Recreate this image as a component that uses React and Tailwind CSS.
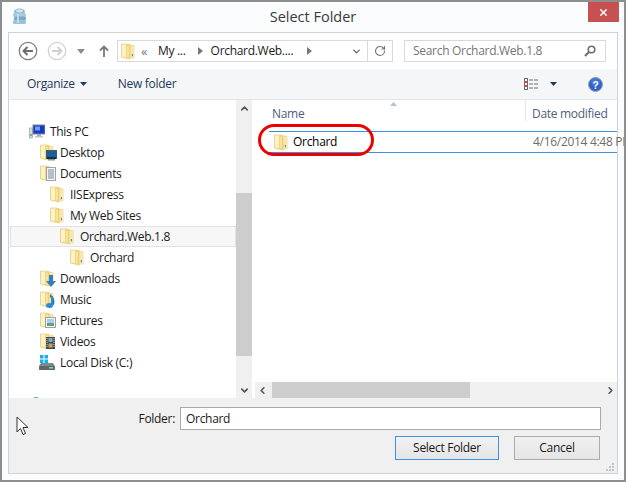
import { ChevronUp, ChevronDown, ChevronLeft, ChevronRight, X, RotateCw } from "lucide-react";

// Carpeta amarilla estilo Windows 8, con un pequeño detalle azul abajo
function Folder({ className = "" }) {
  return (
    <svg width="14" height="17" viewBox="0 0 14 17" className={"shrink-0 block " + className}>
      <path d="M0.5 1 H7 L8 2.5 H13 V15 H4 L0.5 14 Z" fill="#f3dd92" stroke="#d9c27a" strokeWidth="0.6" />
      <path d="M1 1.5 H6 V14.5 L1 13.5 Z" fill="#fcf3c4" />
      <path d="M5 2 L9.5 0.8 V16.5 L5 15.2 Z" fill="#efcf72" />
      <path d="M5.6 3 L8 2.4 V14.8 L5.6 14.2 Z" fill="#f8e39a" />
      <path d="M9.5 2.5 H13 V15 H9.5 Z" fill="#f6e7ae" />
      <path d="M10.8 11 h1.2 v2.3 h-1.2 Z" fill="#4f94cc" />
    </svg>
  );
}

function Badge({ kind }) {
  if (kind === "desktop") {
    return (
      <svg width="11" height="11" viewBox="0 0 11 11" className="absolute left-[6px] top-[6px]">
        <rect x="0" y="0.5" width="11" height="8" fill="#1d5f98" stroke="#4a5a68" />
        <rect x="1" y="7" width="9" height="2" fill="#16324b" />
        <rect x="2" y="9" width="7" height="1.5" fill="#8a949c" />
      </svg>
    );
  }
  if (kind === "docs") {
    return (
      <svg width="10" height="14" viewBox="0 0 10 14" className="absolute left-[6px] top-[2px]">
        <rect x="0.5" y="0.5" width="9" height="13" fill="#f4f6f8" stroke="#9aa3ab" />
        <path d="M2 3h6M2 5h6M2 7h6M2 9h6M2 11h6" stroke="#7d8a96" />
      </svg>
    );
  }
  if (kind === "down") {
    return (
      <svg width="10" height="12" viewBox="0 0 10 12" className="absolute left-[6px] top-[5px]">
        <path d="M3 0h4v6h3l-5 6-5-6h3z" fill="#2f7fc4" />
      </svg>
    );
  }
  if (kind === "music") {
    return (
      <svg width="9" height="14" viewBox="0 0 9 14" className="absolute left-[6px] top-[3px]">
        <path d="M4 0 C8 3 9 6 8 11 L6 10 L6 5 L4 3 Z" fill="#1d6fb8" />
        <ellipse cx="3.5" cy="11.5" rx="3.5" ry="2.5" fill="#2f88d0" />
        <rect x="5" y="2" width="2" height="9" fill="#2f88d0" />
      </svg>
    );
  }
  if (kind === "pics") {
    return (
      <svg width="11" height="11" viewBox="0 0 11 11" className="absolute left-[5px] top-[5px]">
        <rect x="0.5" y="0.5" width="10" height="10" fill="#f2f4f5" stroke="#9ba3a8" />
        <rect x="2" y="2" width="7" height="4" fill="#a8d0e6" />
        <rect x="2" y="6" width="7" height="3" fill="#6f9a88" />
      </svg>
    );
  }
  if (kind === "video") {
    return (
      <svg width="9" height="12" viewBox="0 0 9 12" className="absolute left-[6px] top-[4px]">
        <rect width="9" height="12" fill="#3f4a52" />
        <rect x="2.5" y="1" width="4" height="4" fill="#7fa7c4" />
        <rect x="2.5" y="6.5" width="4" height="4" fill="#c5a45a" />
        <path d="M1 1v10M8 1v10" stroke="#d8dde0" strokeDasharray="1 1" />
      </svg>
    );
  }
  return null;
}

function TreeIcon({ kind }) {
  if (kind === "pc") {
    return (
      <svg width="16" height="16" viewBox="0 0 16 16" className="shrink-0">
        <rect x="0.5" y="4" width="3" height="10" fill="#d6dbd8" stroke="#8f9a95" strokeWidth="0.6" />
        <rect x="1" y="10" width="2" height="2" fill="#58c05a" />
        <rect x="4" y="1" width="12" height="9" fill="#1738c8" stroke="#7e8a99" />
        <rect x="6" y="2.5" width="5" height="4" fill="#6fa0ee" />
        <rect x="8" y="10" width="4" height="2" fill="#a5adb5" />
        <rect x="6" y="12" width="8" height="1.5" fill="#c0c6cc" />
      </svg>
    );
  }
  if (kind === "disk") {
    return (
      <svg width="16" height="17" viewBox="0 0 16 17" className="shrink-0">
        <path d="M1 1h3.5v3.5H1zM5.5 1H9v3.5H5.5zM1 5.5h3.5V9H1zM5.5 5.5H9V9H5.5z" fill="#12b2ee" />
        <path d="M2 9 H14 L16 12 V16 H0 V12 Z" fill="#7d8a8c" />
        <rect x="0.5" y="12" width="15" height="4" fill="#5b6769" />
        <rect x="10" y="13" width="4" height="1.5" fill="#7fdc7a" />
      </svg>
    );
  }
  return (
    <span className="relative block w-[16px] h-[17px] shrink-0">
      <Folder />
      <Badge kind={kind} />
    </span>
  );
}

const treeRows = [
  { label: "This PC", icon: "pc", indent: "pl-[20px]", gap: "gap-[5px]" },
  { label: "Desktop", icon: "desktop", indent: "pl-[31px]", gap: "gap-[4px]" },
  { label: "Documents", icon: "docs", indent: "pl-[31px]", gap: "gap-[4px]" },
  { label: "IISExpress", icon: "folder", indent: "pl-[41px]", gap: "gap-[4px]" },
  { label: "My Web Sites", icon: "folder", indent: "pl-[41px]", gap: "gap-[4px]" },
  { label: "Orchard.Web.1.8", icon: "folder", indent: "pl-[49px]", gap: "gap-[4px]", selected: true },
  { label: "Orchard", icon: "folder", indent: "pl-[61px]", gap: "gap-[4px]" },
  { label: "Downloads", icon: "down", indent: "pl-[31px]", gap: "gap-[4px]" },
  { label: "Music", icon: "music", indent: "pl-[31px]", gap: "gap-[4px]" },
  { label: "Pictures", icon: "pics", indent: "pl-[31px]", gap: "gap-[4px]" },
  { label: "Videos", icon: "video", indent: "pl-[31px]", gap: "gap-[4px]" },
  { label: "Local Disk (C:)", icon: "disk", indent: "pl-[30px]", gap: "gap-[5px]" },
];

function App() {
  return (
    <div className="relative w-[626px] h-[482px] overflow-hidden bg-[#fbfcfd] border-2 border-[#8e8e8e] font-['Open_Sans',sans-serif] text-[12px] tracking-[-0.3px] text-[#1a1a1a] flex flex-col">
      {/* Barra de título */}
      <div className="relative h-[30px] shrink-0 flex justify-center pt-[5px]">
        <svg width="15" height="17" viewBox="0 0 15 17" className="absolute left-[10px] top-[6px]">
          <ellipse cx="7.5" cy="3.5" rx="5.5" ry="3" fill="#8fb8d2" />
          <ellipse cx="7.5" cy="2.8" rx="3.5" ry="1.6" fill="#d3e6f0" />
          <rect x="1" y="5" width="13" height="4" rx="1.5" fill="#a9cbe0" />
          <rect x="2" y="8.5" width="12" height="4" rx="1.5" fill="#7ea9c5" />
          <rect x="1" y="12" width="13" height="4" rx="1.5" fill="#9cc2da" />
          <path d="M6 6v9" stroke="#d3e6f0" strokeWidth="1.5" />
        </svg>
        <span className="text-[14.5px] leading-[20px] tracking-normal text-[#3a3a3a]">Select Folder</span>
        <div className="absolute right-[5px] top-0 w-[31px] h-[20px] bg-[#c75050] flex items-center justify-center">
          <X size={11} color="#fff" strokeWidth={3.2} />
        </div>
      </div>

      {/* Panel interior */}
      <div className="mx-[6px] h-[442px] shrink-0 border border-[#cfd3d6] bg-white flex flex-col">
        {/* Navegación */}
        <div className="h-[36px] shrink-0 flex items-center">
          <svg width="20" height="20" viewBox="0 0 20 20" className="ml-[9px]">
            <circle cx="10" cy="10" r="8.7" fill="none" stroke="#7d7d7d" strokeWidth="1.3" />
            <path d="M15 10H6M9.5 6L5.5 10L9.5 14" fill="none" stroke="#6e6e6e" strokeWidth="2" />
          </svg>
          <svg width="20" height="20" viewBox="0 0 20 20" className="ml-[9px]">
            <circle cx="10" cy="10" r="8.7" fill="none" stroke="#d2d2d2" strokeWidth="1.3" />
            <path d="M5 10H14M10.5 6L14.5 10L10.5 14" fill="none" stroke="#cfcfcf" strokeWidth="2" />
          </svg>
          <svg width="8" height="5" viewBox="0 0 8 5" className="ml-[10px]">
            <path d="M0 0H8L4 5Z" fill="#8c8c8c" />
          </svg>
          <svg width="10" height="13" viewBox="0 0 10 13" className="ml-[14px]">
            <path d="M5 12V1.5M1 5.5L5 1.5L9 5.5" fill="none" stroke="#7a7a7a" strokeWidth="1.8" />
          </svg>
          <div className="ml-[8px] w-[276px] h-[22px] border border-[#d9d9d9] flex items-center">
            <Folder className="ml-[3px]" />
            <span className="ml-[6px] w-[8px] text-[#777] text-[13px] leading-none">«</span>
            <span className="ml-[9px]">My ...</span>
            <svg width="5" height="8" viewBox="0 0 5 8" className="ml-[12px]"><path d="M0 0L5 4L0 8Z" fill="#777" /></svg>
            <span className="ml-[8px]">Orchard.Web....</span>
            <svg width="5" height="8" viewBox="0 0 5 8" className="ml-[14px]"><path d="M0 0L5 4L0 8Z" fill="#777" /></svg>
            <ChevronDown size={11} color="#666" strokeWidth={3} className="ml-auto mr-[5px]" />
            <div className="w-[25px] h-full border-l border-[#d9d9d9] flex items-center justify-center">
              <RotateCw size={12} color="#707070" strokeWidth={2.2} />
            </div>
          </div>
          <div className="ml-[11px] w-[202px] h-[22px] border border-[#d9d9d9] flex items-center pl-[8px] pr-[9px] text-[#767676]">
            <span>Search Orchard.Web.1.8</span>
            <svg width="12" height="12" viewBox="0 0 12 12" className="ml-auto">
              <circle cx="7.5" cy="4.5" r="3.3" fill="none" stroke="#6f6f6f" strokeWidth="1.6" />
              <path d="M5 7L1 11" stroke="#6f6f6f" strokeWidth="2.2" />
            </svg>
          </div>
        </div>

        {/* Barra de herramientas */}
        <div className="h-[31px] shrink-0 bg-[#f5f6f7] border-b border-[#e3e5e7] flex items-center text-[#1e395b]">
          <span className="ml-[18px]">Organize</span>
          <svg width="7" height="4" viewBox="0 0 7 4" className="ml-[5px]"><path d="M0 0H7L3.5 4Z" fill="#1e395b" /></svg>
          <span className="ml-[31px]">New folder</span>
          <svg width="15" height="13" viewBox="0 0 15 13" className="ml-auto">
            <rect x="0.5" y="0.5" width="3" height="3" fill="#fff" stroke="#66707a" />
            <rect x="0.5" y="4.5" width="3" height="3" fill="#fff" stroke="#c04a4a" />
            <rect x="0.5" y="8.5" width="3" height="3" fill="#fff" stroke="#66707a" />
            <path d="M5 2h4M10 2h4M5 6h4M10 6h4M5 10h4M10 10h4" stroke="#66707a" />
          </svg>
          <svg width="7" height="4" viewBox="0 0 7 4" className="ml-[11px]"><path d="M0 0H7L3.5 4Z" fill="#1e395b" /></svg>
          <svg width="15" height="15" viewBox="0 0 15 15" className="ml-[31px] mr-[14px]">
            <circle cx="7.5" cy="7.5" r="7" fill="#2f62c4" stroke="#9aa6b8" />
            <circle cx="7.5" cy="5" r="4.5" fill="#4f86e0" opacity="0.6" />
            <text x="7.5" y="11.5" textAnchor="middle" fontSize="10" fontWeight="700" fill="#fff" fontFamily="'Liberation Sans',sans-serif">?</text>
          </svg>
        </div>

        {/* Árbol y lista */}
        <div className="h-[298px] shrink-0 flex">
          <div className="w-[227px] shrink-0 overflow-hidden pt-[21px]">
            {treeRows.map((row) => (
              <div
                key={row.label}
                className={`h-[21px] flex items-center ${row.indent} ${row.gap} ${
                  row.selected ? "ml-[1px] bg-[#f7f7f7] border border-[#e2e2e2]" : ""
                }`}
              >
                <TreeIcon kind={row.icon} />
                <span>{row.label}</span>
              </div>
            ))}
            {/* Red: la fila queda cortada por el pie */}
            <svg width="12" height="12" viewBox="0 0 12 12" className="block ml-[21px] mt-[23px]">
              <circle cx="6" cy="6" r="5" fill="#5f9fd0" />
            </svg>
          </div>

          {/* Scroll vertical */}
          <div className="w-[16px] shrink-0 bg-[#f0f0f0] flex flex-col items-center">
            <div className="h-[16px] flex items-center"><ChevronUp size={11} color="#555" strokeWidth={3.5} /></div>
            <div className="h-[77px]" />
            <div className="w-full h-[163px] bg-[#cdcdcd]" />
            <div className="mt-auto h-[16px] flex items-center"><ChevronDown size={11} color="#555" strokeWidth={3.5} /></div>
          </div>

          <div className="flex-1 min-w-0 flex flex-col pl-[4px] overflow-hidden">
            <div className="relative h-[25px] shrink-0 flex text-[#4c607a]">
              <svg width="7" height="4" viewBox="0 0 7 4" className="absolute left-[134px] top-[2px]"><path d="M3.5 0L7 4H0Z" fill="#a9c6e0" /></svg>
              <span className="ml-[16px] mt-[5px]">Name</span>
              <span className="absolute left-[269px] top-0 pl-[6px] pt-[5px] border-l border-[#e3e8ee] h-[21px] whitespace-nowrap">Date modified</span>
            </div>
            <div className="mt-[6px] ml-[13px] h-[22px] shrink-0 border-y border-[#3d8fe0] flex items-center whitespace-nowrap">
              <Folder className="ml-[5px]" />
              <span className="ml-[5px] text-black">Orchard</span>
              <span className="absolute left-[531px] text-[#6d6d6d]">4/16/2014 4:48 PM</span>
            </div>
            {/* Scroll horizontal */}
            <div className="mt-auto h-[16px] shrink-0 bg-[#f0f0f0] flex items-center -ml-[1px]">
              <ChevronLeft size={11} color="#555" strokeWidth={3.5} className="ml-[2px]" />
              <div className="ml-[4px] w-[198px] h-full bg-[#cdcdcd]" />
              <ChevronRight size={11} color="#555" strokeWidth={3.5} className="ml-auto mr-[1px]" />
            </div>
          </div>
        </div>

        {/* Pie */}
        <div className="relative flex-1 min-h-0 bg-[#f0f0f0] flex flex-col items-end border-t border-[#f0f0f0]">
          <div className="mt-[8px] mr-[16px] flex items-center">
            <span>Folder:</span>
            <div className="ml-[5px] w-[421px] h-[23px] border border-[#a9a9a9] bg-white flex items-center pl-[5px]">Orchard</div>
          </div>
          <div className="mt-[6px] mr-[17px] flex gap-[15px]">
            <button className="w-[104px] h-[24px] border border-[#3d8fe8] bg-gradient-to-b from-[#f2f2f2] to-[#e5e5e5]">Select Folder</button>
            <button className="w-[86px] h-[24px] border border-[#acacac] bg-gradient-to-b from-[#f0f0f0] to-[#e5e5e5]">Cancel</button>
          </div>
          <svg width="8" height="8" viewBox="0 0 8 8" className="absolute right-[3px] bottom-[2px]">
            <path d="M6 0h2v2H6zM3 3h2v2H3zM6 3h2v2H6zM0 6h2v2H0zM3 6h2v2H3zM6 6h2v2H6z" fill="#c4c4c4" />
          </svg>
          <svg width="13" height="20" viewBox="0 0 13 20" className="absolute left-[7px] top-[17px]">
            <path d="M1 1V16L4.5 12.5L7 18.5L9.5 17.5L7 11.5H12Z" fill="#fff" stroke="#333" strokeWidth="1" />
          </svg>
        </div>
      </div>

      {/* Marca roja sobre la fila */}
      <div className="absolute left-[256px] top-[122px] w-[116px] h-[32px] rounded-[16px] border-[3px] border-[#ee0000] pointer-events-none" />
    </div>
  );
}

export default App;
